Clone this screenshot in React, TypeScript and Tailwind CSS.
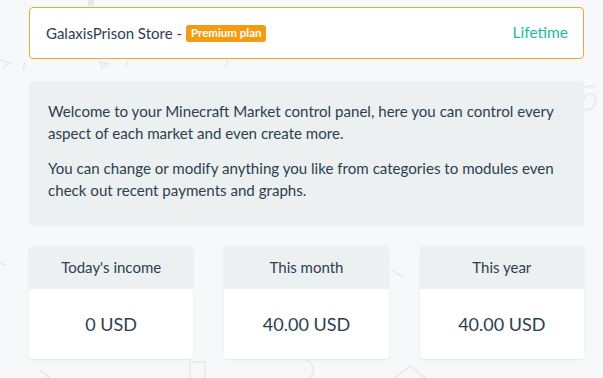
const Doodles = () => (
  <svg
    className="absolute inset-0 w-full h-full pointer-events-none"
    viewBox="0 0 603 378"
    fill="none"
    stroke="#e9ebef"
    strokeWidth="2"
  >
    <rect x="88" y="0" width="6" height="6" fill="#e6e8ec" stroke="none" />
    <path d="M0 60 L10 63 L2 68" />
    <path d="M128 60 L126 67" />
    <path d="M25 62 L23 70" />
    <path d="M100 62 L108 64 L102 68 Z" />
    <path d="M228 60 L226 67" />
    <path d="M584 100 a6 6 0 1 1 12 0 a10 10 0 1 1 -20 0 a14 14 0 0 1 19 -13" />
    <path d="M0 262 L6 266" />
    <path d="M392 270 L404 278" />
    <path d="M190 362 L190 378 M190 362 L205 362 L205 378" />
    <path d="M305 360 a10 10 0 0 1 4 18" />
    <path d="M395 378 L410 366 L425 378" />
    <path d="M40 370 L50 378" />
  </svg>
);

const Stat = ({ title, value }: { title: string; value: string }) => (
  <div className="bg-white rounded shadow-[0_1px_2px_rgba(0,0,0,0.08)] overflow-hidden">
    <div className="h-[43px] bg-[#ecf0f1] flex items-center justify-center text-[15px] text-[#2c3e50]">
      {title}
    </div>
    <div className="h-[70px] flex items-center justify-center text-[18px] text-[#2c3e50]">
      {value}
    </div>
  </div>
);

export default function App() {
  return (
    <div className="relative w-[603px] h-[378px] overflow-hidden bg-[#f7f8fa] font-['Lato',sans-serif]">
      <Doodles />
      <div className="relative w-[555px] ml-[29px] pt-[7px] flex flex-col">
        <div className="h-[52px] bg-white border border-[#f0a534] rounded flex items-center justify-between pl-[16px] pr-[15px]">
          <div className="flex items-center text-[15px] text-[#2c3e50]">
            <span>GalaxisPrison Store -</span>
            <span className="ml-[4px] bg-[#f39c12] text-white text-[11.5px] font-bold rounded-[3px] px-[5px] h-[17px] flex items-center">
              Premium plan
            </span>
          </div>
          <span className="text-[15.5px] text-[#1abc9c]">Lifetime</span>
        </div>

        <div className="mt-[22px] h-[145px] bg-[#ecf0f1] rounded px-[19px] pt-[19px] text-[15.1px] leading-[22px] text-[#2c3e50]">
          <p>
            Welcome to your Minecraft Market control panel, here you can control every
            aspect of each market and even create more.
          </p>
          <p className="mt-[13px]">
            You can change or modify anything you like from categories to modules even
            check out recent payments and graphs.
          </p>
        </div>

        <div className="mt-[20px] grid grid-cols-3 gap-[31px]">
          <Stat title="Today's income" value="0 USD" />
          <Stat title="This month" value="40.00 USD" />
          <Stat title="This year" value="40.00 USD" />
        </div>
      </div>
    </div>
  );
}
